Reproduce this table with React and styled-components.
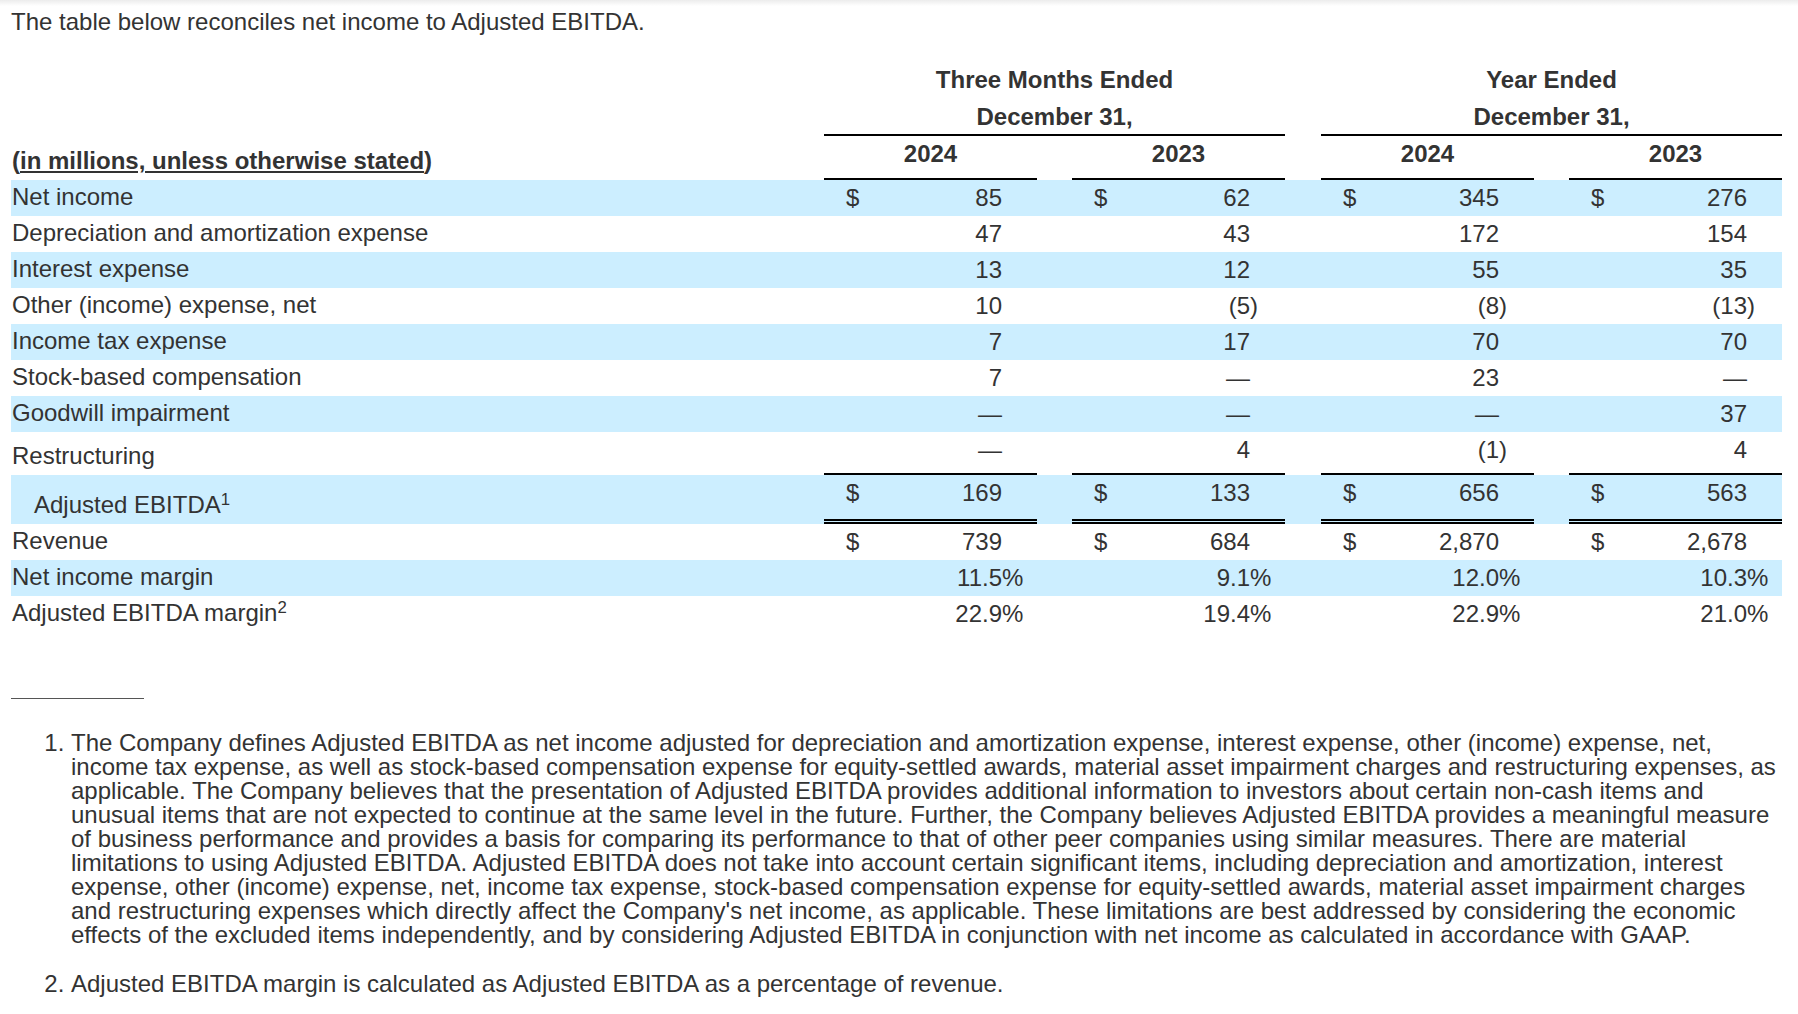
import React from 'react'
import styled, {createGlobalStyle} from 'styled-components';

const GlobalStyle = createGlobalStyle`
  html, body {
    margin: 0;
    padding: 0;
    background: linear-gradient(#ececec, #fff 6px) no-repeat, #fff;
  }
`

const Page = styled.div`
  padding: 8px 17px 40px 11px;
  font-family: "Liberation Sans", Arial, Helvetica, sans-serif;
  font-size: 24px;
  line-height: 27px;
  color: #333;
`

const Intro = styled.p`
  margin: 0;
`

const Table = styled.table`
  border-collapse: separate;
  border-spacing: 0;
  table-layout: fixed;
  width: 1770px;
  margin-top: 27px;
`

const Row = styled.tr`
  height: ${p => p.$h || 36}px;
  background: ${p => (p.$shaded ? '#cceeff' : 'transparent')};
`

const rules = {
  single: '2px solid #000',
  double: '5px double #000',
}

const HeadCell = styled.th`
  padding: 4px 0 ${p => (p.$rule ? 4 : 6)}px;
  font-weight: 700;
  text-align: center;
  vertical-align: top;
  white-space: nowrap;
  border-bottom: ${p => (p.$rule ? rules.single : 'none')};
`

const Label = styled.td`
  padding: 3px 0 6px ${p => (p.$indent ? 23 : 1)}px;
  vertical-align: bottom;
  white-space: nowrap;
  font-weight: ${p => (p.$bold ? 700 : 400)};
`

const Units = styled.span`
  text-decoration: underline;
  text-decoration-thickness: 2px;
  text-underline-offset: 2px;
`

const DataCell = styled.td`
  padding: 4px 0 4px;
  vertical-align: top;
  white-space: nowrap;
  border-bottom: ${p => (p.$rule ? rules[p.$rule] : 'none')};
`

const Dollar = styled(DataCell)`
  padding-left: 22px;
  text-align: left;
`

const Value = styled(DataCell)`
  text-align: right;
`

const Suffix = styled(DataCell)`
  text-align: left;
`

const Gap = styled.td`
  padding: 0;
`

const Sup = styled.sup`
  font-size: 70%;
  line-height: 0;
  vertical-align: 0.5em;
`

const FootRule = styled.div`
  width: 133px;
  margin-top: 66px;
  border-top: 1px solid #555;
`

const Notes = styled.ol`
  margin: 32px 0 0;
  padding-left: 60px;
  line-height: 24px;
  width: 1710px;
`

const Note = styled.li`
  & + & {
    margin-top: 25px;
  }
`

const rows = [
  {label: 'Net income', shaded: true, dollar: true, values: ['85', '62', '345', '276']},
  {label: 'Depreciation and amortization expense', values: ['47', '43', '172', '154']},
  {label: 'Interest expense', shaded: true, values: ['13', '12', '55', '35']},
  {label: 'Other (income) expense, net', values: ['10', '(5)', '(8)', '(13)']},
  {label: 'Income tax expense', shaded: true, values: ['7', '17', '70', '70']},
  {label: 'Stock-based compensation', values: ['7', '—', '23', '—']},
  {label: 'Goodwill impairment', shaded: true, values: ['—', '—', '—', '37']},
  {label: 'Restructuring', h: 43, rule: 'single', values: ['—', '4', '(1)', '4']},
  {label: 'Adjusted EBITDA', sup: '1', indent: true, shaded: true, dollar: true, h: 49, rule: 'double', values: ['169', '133', '656', '563']},
  {label: 'Revenue', dollar: true, values: ['739', '684', '2,870', '2,678']},
  {label: 'Net income margin', shaded: true, values: ['11.5%', '9.1%', '12.0%', '10.3%']},
  {label: 'Adjusted EBITDA margin', sup: '2', values: ['22.9%', '19.4%', '22.9%', '21.0%']},
]

// split the trailing ")" or "%" into its own column so the digits line up
const splitValue = (v) => {
  const last = v.slice(-1)
  if (last === ')' || last === '%') return [v.slice(0, -1), last]
  return [v, '']
}

const colWidths = [813, 59, 119, 35, 35, 59, 119, 35, 36, 59, 119, 35, 35, 59, 119, 35]

const DataRow = ({row}) => (
  <Row $shaded={row.shaded} $h={row.h}>
    <Label $indent={row.indent}>
      {row.label}
      {row.sup && <Sup>{row.sup}</Sup>}
    </Label>
    {row.values.map((v, i) => {
      const [num, suffix] = splitValue(v)
      return (
        <React.Fragment key={i}>
          {i > 0 && <Gap />}
          <Dollar $rule={row.rule}>{row.dollar ? '$' : ''}</Dollar>
          <Value $rule={row.rule}>{num}</Value>
          <Suffix $rule={row.rule}>{suffix}</Suffix>
        </React.Fragment>
      )
    })}
  </Row>
)

const App = () => {
  return (
    <Page>
      <GlobalStyle />
      <Intro>The table below reconciles net income to Adjusted EBITDA.</Intro>

      <Table>
        <colgroup>
          {colWidths.map((w, i) => <col key={i} style={{width: w}} />)}
        </colgroup>
        <thead>
          <Row $h={37}>
            <Label />
            <HeadCell colSpan={7}>Three Months Ended</HeadCell>
            <Gap />
            <HeadCell colSpan={7}>Year Ended</HeadCell>
          </Row>
          <Row $h={37}>
            <Label />
            <HeadCell colSpan={7} $rule>December 31,</HeadCell>
            <Gap />
            <HeadCell colSpan={7} $rule>December 31,</HeadCell>
          </Row>
          <Row $h={44}>
            <Label $bold>(<Units>in millions, unless otherwise stated</Units>)</Label>
            <HeadCell colSpan={3} $rule>2024</HeadCell>
            <Gap />
            <HeadCell colSpan={3} $rule>2023</HeadCell>
            <Gap />
            <HeadCell colSpan={3} $rule>2024</HeadCell>
            <Gap />
            <HeadCell colSpan={3} $rule>2023</HeadCell>
          </Row>
        </thead>
        <tbody>
          {rows.map(row => <DataRow key={row.label} row={row} />)}
        </tbody>
      </Table>

      <FootRule />
      <Notes>
        <Note>
          The Company defines Adjusted EBITDA as net income adjusted for depreciation and amortization expense, interest expense, other (income) expense, net, income tax expense, as well as stock-based compensation expense for equity-settled awards, material asset impairment charges and restructuring expenses, as applicable. The Company believes that the presentation of Adjusted EBITDA provides additional information to investors about certain non-cash items and unusual items that are not expected to continue at the same level in the future. Further, the Company believes Adjusted EBITDA provides a meaningful measure of business performance and provides a basis for comparing its performance to that of other peer companies using similar measures. There are material limitations to using Adjusted EBITDA. Adjusted EBITDA does not take into account certain significant items, including depreciation and amortization, interest expense, other (income) expense, net, income tax expense, stock-based compensation expense for equity-settled awards, material asset impairment charges and restructuring expenses which directly affect the Company's net income, as applicable. These limitations are best addressed by considering the economic effects of the excluded items independently, and by considering Adjusted EBITDA in conjunction with net income as calculated in accordance with GAAP.
        </Note>
        <Note>Adjusted EBITDA margin is calculated as Adjusted EBITDA as a percentage of revenue.</Note>
      </Notes>
    </Page>
  )
}

export default App
